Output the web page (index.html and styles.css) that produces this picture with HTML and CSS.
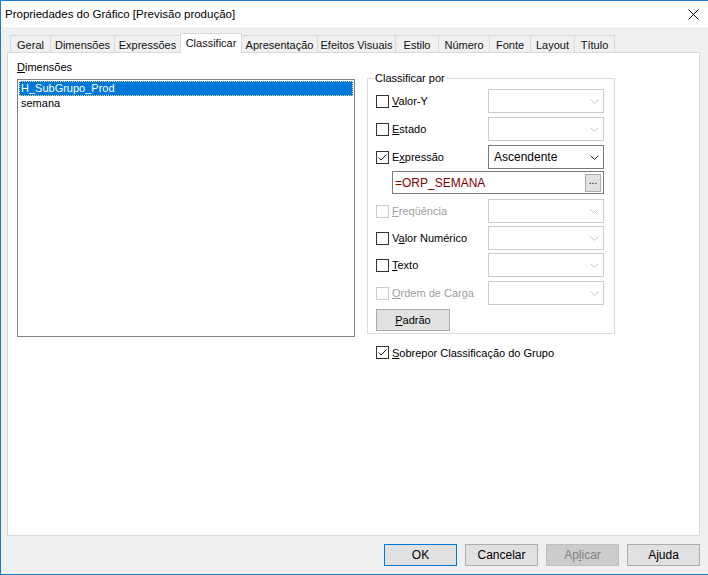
FILE: index.html
```html
<!DOCTYPE html>
<html lang="pt">
<head>
<meta charset="utf-8">
<title>Propriedades do Gráfico</title>
<link rel="stylesheet" href="styles.css">
</head>
<body>
<div class="window">
  <div class="titlebar">
    <span class="title">Propriedades do Gráfico [Previsão produção]</span>
    <svg class="close" width="11" height="11" viewBox="0 0 11 11"><path d="M0.5 0.5 L10.5 10.5 M10.5 0.5 L0.5 10.5" stroke="#000" stroke-width="1" fill="none"/></svg>
  </div>
  <div class="client">
    <div class="tabs">
      <div class="tab t-geral">Geral</div>
      <div class="tab t-dim">Dimensões</div>
      <div class="tab t-expr">Expressões</div>
      <div class="tab t-class active">Classificar</div>
      <div class="tab t-apres">Apresentação</div>
      <div class="tab t-efe">Efeitos Visuais</div>
      <div class="tab t-est">Estilo</div>
      <div class="tab t-num">Número</div>
      <div class="tab t-fon">Fonte</div>
      <div class="tab t-lay">Layout</div>
      <div class="tab t-tit">Título</div>
    </div>
    <div class="panel">
      <div class="col-left">
        <div class="label"><u>D</u>imensões</div>
        <div class="listbox">
          <div class="item selected">H_SubGrupo_Prod</div>
          <div class="item">semana</div>
        </div>
      </div>
      <div class="col-right">
        <fieldset class="group">
          <legend>Classificar por</legend>
          <div class="row">
            <div class="check"><span class="box"></span><span><u>V</u>alor-Y</span></div>
            <div class="combo disabled"><svg width="9" height="5" viewBox="0 0 9 5"><path d="M0.5 0.5 L4.5 4.5 L8.5 0.5" stroke="#c4c4c4" fill="none"/></svg></div>
          </div>
          <div class="row">
            <div class="check"><span class="box"></span><span><u>E</u>stado</span></div>
            <div class="combo disabled"><svg width="9" height="5" viewBox="0 0 9 5"><path d="M0.5 0.5 L4.5 4.5 L8.5 0.5" stroke="#c4c4c4" fill="none"/></svg></div>
          </div>
          <div class="row">
            <div class="check"><span class="box"><svg width="11" height="11" viewBox="0 0 11 11"><path d="M1.5 5.5 L4 8 L9.5 2.5" stroke="#222" fill="none"/></svg></span><span>E<u>x</u>pressão</span></div>
            <div class="combo enabled"><span>Ascendente</span><svg width="9" height="5" viewBox="0 0 9 5"><path d="M0.5 0.5 L4.5 4.5 L8.5 0.5" stroke="#333" fill="none"/></svg></div>
          </div>
          <div class="exprfield">
            <span class="exprtext">=ORP_SEMANA</span>
            <span class="dots">...</span>
          </div>
          <div class="row after-expr">
            <div class="check off"><span class="box"></span><span><u>F</u>reqüência</span></div>
            <div class="combo disabled"><svg width="9" height="5" viewBox="0 0 9 5"><path d="M0.5 0.5 L4.5 4.5 L8.5 0.5" stroke="#c4c4c4" fill="none"/></svg></div>
          </div>
          <div class="row tight">
            <div class="check"><span class="box"></span><span>V<u>a</u>lor Numérico</span></div>
            <div class="combo disabled"><svg width="9" height="5" viewBox="0 0 9 5"><path d="M0.5 0.5 L4.5 4.5 L8.5 0.5" stroke="#c4c4c4" fill="none"/></svg></div>
          </div>
          <div class="row">
            <div class="check"><span class="box"></span><span><u>T</u>exto</span></div>
            <div class="combo disabled"><svg width="9" height="5" viewBox="0 0 9 5"><path d="M0.5 0.5 L4.5 4.5 L8.5 0.5" stroke="#c4c4c4" fill="none"/></svg></div>
          </div>
          <div class="row">
            <div class="check off"><span class="box"></span><span><u>O</u>rdem de Carga</span></div>
            <div class="combo disabled"><svg width="9" height="5" viewBox="0 0 9 5"><path d="M0.5 0.5 L4.5 4.5 L8.5 0.5" stroke="#c4c4c4" fill="none"/></svg></div>
          </div>
          <div class="btn padrao"><u>P</u>adrão</div>
        </fieldset>
        <div class="check override"><span class="box"><svg width="11" height="11" viewBox="0 0 11 11"><path d="M1.5 5.5 L4 8 L9.5 2.5" stroke="#222" fill="none"/></svg></span><span><u>S</u>obrepor Classificação do Grupo</span></div>
      </div>
    </div>
    <div class="buttons">
      <div class="btn default">OK</div>
      <div class="btn">Cancelar</div>
      <div class="btn inactive">Ap<u>l</u>icar</div>
      <div class="btn">Ajuda</div>
    </div>
  </div>
</div>
</body>
</html>
```

FILE: styles.css
```css
* { box-sizing: border-box; }
html, body { margin: 0; padding: 0; }
body {
  width: 708px;
  height: 575px;
  overflow: hidden;
  font-family: "Liberation Sans", Arial, sans-serif;
  font-size: 11px;
  color: #000;
  background: #f0f0f0;
}
u { text-decoration: underline; text-underline-offset: 1px; }

.window {
  width: 708px;
  height: 575px;
  display: flex;
  flex-direction: column;
  border-top: 1px solid #1b7ad0;
  border-left: 1px solid #1b7ad0;
  border-bottom: 1px solid #1b7ad0;
}

.titlebar {
  height: 26px;
  flex: none;
  background: #fff;
  display: flex;
  align-items: center;
  justify-content: space-between;
  padding: 0 9px 0 4px;
}
.title {
  font-size: 11.5px;
}
.close { display: block; }

.client {
  flex: 1;
  display: flex;
  flex-direction: column;
  padding: 6px 8px 8px 6px;
  background: #f0f0f0;
}

.tabs {
  height: 19px;
  flex: none;
  display: flex;
  align-items: flex-end;
  padding-left: 3px;
}
.tab {
  height: 17px;
  border: 1px solid #d9d9d9;
  border-bottom: 0;
  margin-left: -1px;
  background: #f0f0f0;
  display: flex;
  align-items: center;
  justify-content: center;
  padding-top: 1px;
  white-space: nowrap;
  color: #111;
}
.tab:first-child { margin-left: 0; }
.tab.active {
  height: 20px;
  margin-bottom: -1px;
  background: #fff;
  position: relative;
  z-index: 1;
  padding-top: 0;
  padding-bottom: 2px;
}
.t-geral { width: 41px; }
.t-dim { width: 65px; }
.t-expr { width: 67px; }
.t-class { width: 62px; }
.t-apres { width: 77px; }
.t-efe { width: 79px; }
.t-est { width: 44px; }
.t-num { width: 52px; }
.t-fon { width: 42px; }
.t-lay { width: 45px; }
.t-tit { width: 41px; }

.panel {
  flex: 1;
  background: #fff;
  border: 1px solid #d9d9d9;
  display: flex;
  gap: 12px;
  padding: 7px 0 0 9px;
}

.col-left { width: 338px; display: flex; flex-direction: column; }
.label { height: 14px; line-height: 14px; margin-bottom: 5px; }
.listbox {
  height: 258px;
  border: 1px solid #828282;
  padding: 1px;
}
.item {
  height: 15px;
  line-height: 15px;
  padding-left: 2px;
  white-space: nowrap;
}
.item.selected {
  background: #0078d7;
  color: #fff;
  outline: 1px dotted #e8d88a;
  outline-offset: -1px;
}

.col-right { width: 248px; display: flex; flex-direction: column; margin-top: 11px; }
.group {
  margin: 0;
  border: 1px solid #dcdcdc;
  padding: 4px 10px 2px 8px;
  min-width: 0;
}
.group legend {
  padding: 0 1px;
  margin-left: -2px;
  line-height: 14px;
  height: 14px;
}

.row {
  height: 24px;
  display: flex;
  align-items: center;
  justify-content: space-between;
  margin-bottom: 4px;
}
.row.after-expr { margin-top: 5px; margin-bottom: 3px; }
.row.tight { margin-bottom: 3px; }

.check {
  display: flex;
  align-items: center;
  gap: 3px;
  white-space: nowrap;
}
.box {
  width: 13px;
  height: 13px;
  border: 1px solid #333;
  background: #fff;
  display: flex;
  align-items: center;
  justify-content: center;
  flex: none;
}
.box svg { display: block; }
.check.off { color: #a0a0a0; }
.check.off .box { border-color: #cccccc; }

.combo {
  width: 116px;
  height: 24px;
  background: #fff;
  display: flex;
  align-items: center;
  justify-content: space-between;
  padding: 0 4px 0 5px;
}
.combo svg { margin-left: auto; display: block; }
.combo.disabled { border: 1px solid #cccccc; }
.combo.enabled { border: 1px solid #7a7a7a; font-size: 12px; }

.exprfield {
  height: 23px;
  margin: -2px 0 0 16px;
  border: 1px solid #7a7a7a;
  display: flex;
  align-items: center;
  justify-content: space-between;
  padding: 0 2px 0 2px;
}
.exprtext {
  color: #800000;
  font-size: 12px;
}
.dots {
  width: 16px;
  height: 18px;
  background: #e1e1e1;
  border: 1px solid #adadad;
  font-size: 10px;
  line-height: 12px;
  text-align: center;
}

.btn {
  width: 73px;
  height: 22px;
  background: #e1e1e1;
  border: 1px solid #adadad;
  display: flex;
  align-items: center;
  justify-content: center;
  font-size: 12px;
}
.btn.padrao { width: 74px; margin-top: 2px; font-size: 11px; }
.btn.default { border-color: #0078d7; }
.btn.inactive { background: #cccccc; border-color: #bfbfbf; color: #838383; }

.override { margin-top: 12px; margin-left: 9px; }

.buttons {
  flex: none;
  display: flex;
  justify-content: flex-end;
  gap: 8px;
  margin-top: 8px;
}
```
